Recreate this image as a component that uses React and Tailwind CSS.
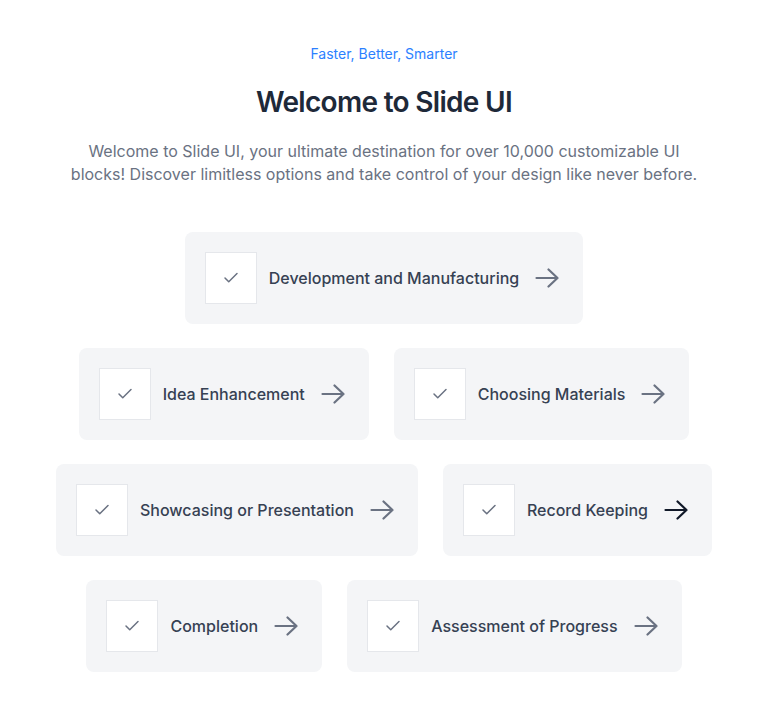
import { Check } from 'lucide-react';

const ITEMS = [
  ['Development and Manufacturing'],
  ['Idea Enhancement', 'Choosing Materials'],
  ['Showcasing or Presentation', 'Record Keeping'],
  ['Completion', 'Assessment of Progress'],
];

function Arrow({ className }) {
  return (
    <svg viewBox="0 0 24 20" fill="none" stroke="currentColor" strokeWidth="2.2" strokeLinecap="round" strokeLinejoin="round" className={className}>
      <path d="M1.5 10h21M13.5 1.5l9 8.5-9 8.5" />
    </svg>
  );
}

function Card({ label, active }) {
  return (
    <div className="flex items-center bg-[#f4f5f7] rounded-lg pl-5 pr-6 py-5">
      <div className="w-[52px] h-[52px] bg-white border border-gray-200 flex items-center justify-center shrink-0">
        <Check className="w-[18px] h-[18px] text-gray-500" strokeWidth={2} />
      </div>
      <span className="ml-3 text-base font-medium text-gray-700">{label}</span>
      <Arrow className={`ml-4 w-6 h-5 ${active ? 'text-gray-900' : 'text-gray-500'}`} />
    </div>
  );
}

export default function App() {
  return (
    <div className="min-h-screen bg-white pt-[44px] pb-10" style={{ fontFamily: 'Inter, "Noto Sans", sans-serif' }}>
      <div className="text-center">
        <p className="text-sm text-blue-500">Faster, Better, Smarter</p>
        <h1 className="mt-5 text-[28px] leading-9 font-semibold text-gray-800 tracking-tight">Welcome to Slide UI</h1>
        <p className="mt-5 mx-auto max-w-[640px] text-base leading-[23px] text-gray-500">
          Welcome to Slide UI, your ultimate destination for over 10,000 customizable UI blocks! Discover limitless options and take control of your design like never before.
        </p>
      </div>
      <div className="mt-[46px] flex flex-col items-center gap-6">
        {ITEMS.map((row, i) => (
          <div key={i} className="flex justify-center gap-[25px]">
            {row.map(label => (
              <Card key={label} label={label} active={label === 'Record Keeping'} />
            ))}
          </div>
        ))}
      </div>
    </div>
  );
}
